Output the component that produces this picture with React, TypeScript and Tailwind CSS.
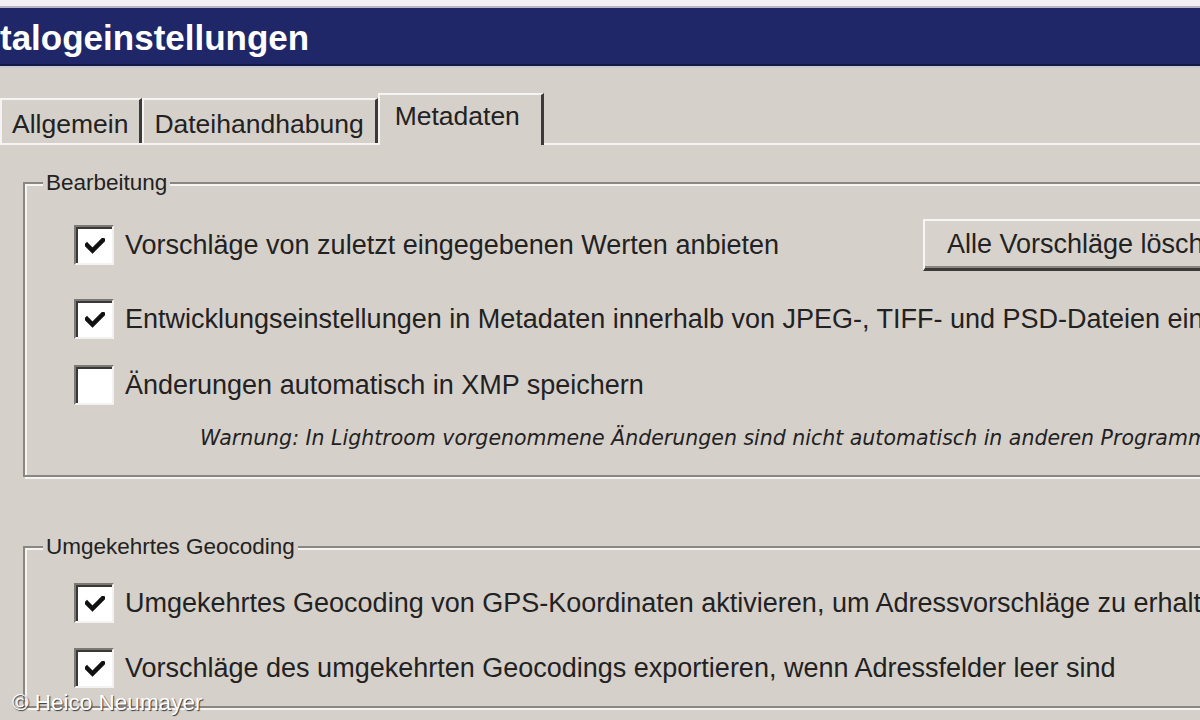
import type { ReactNode } from 'react';

const ui = { fontFamily: '"Liberation Sans", Arial, sans-serif' };

function Check({ checked }: { checked: boolean }) {
    return (
        <div className="flex h-[40px] w-[40px] shrink-0 border-t-2 border-l-2 border-r-2 border-b-2 border-t-[#7c7874] border-l-[#7c7874] border-r-[#f4f2f0] border-b-[#f4f2f0]">
            <div className="flex flex-1 items-center justify-center border-t-2 border-l-2 border-t-[#3a3836] border-l-[#3a3836] bg-white">
                {checked && (
                    <svg width="20" height="16" viewBox="0 0 20 16" aria-hidden="true">
                        <path d="M2 7 L7.5 12.5 L18 2" fill="none" stroke="#111" strokeWidth="4.5" strokeLinecap="square" />
                    </svg>
                )}
            </div>
        </div>
    );
}

function Row({ checked, children }: { checked: boolean; children: ReactNode }) {
    return (
        <div className="flex h-[40px] items-center">
            <div className="ml-[49px]">
                <Check checked={checked} />
            </div>
            <span className="ml-[11px] whitespace-nowrap text-[27px] text-[#222]">{children}</span>
        </div>
    );
}

function Group({ title, children }: { title: string; children: ReactNode }) {
    return (
        <fieldset className="w-[1240px] border-2 border-[#8a8682] shadow-[inset_2px_2px_0_#f6f4f2,2px_2px_0_#f6f4f2]">
            <legend className="ml-[18px] bg-[#d6d0cb] px-[3px] text-[22.5px] leading-[24px] text-[#222]">{title}</legend>
            {children}
        </fieldset>
    );
}

function Tab({ label, active }: { label: string; active?: boolean }) {
    return (
        <div
            className={
                active
                    ? 'relative z-10 -mb-[2px] flex h-[52px] items-start border-t-2 border-l-2 border-r-[3px] border-t-[#f6f4f2] border-l-[#f6f4f2] border-r-[#3c3a38] bg-[#d6d0cb] pl-[15px] pr-[21px] pt-[6px]'
                    : 'flex h-[45px] items-start border-t-2 border-l-2 border-r-[3px] border-t-[#f6f4f2] border-l-[#f6f4f2] border-r-[#3c3a38] bg-[#d6d0cb] pl-[10px] pr-[11px] pt-[9px]'
            }
        >
            <span className="whitespace-nowrap text-[26.5px] leading-[30px] text-[#222]">{label}</span>
        </div>
    );
}

export default function App() {
    return (
        <div style={ui} className="relative h-[720px] w-[1200px] overflow-hidden bg-[#d6d0cb]">
            {/* window frame + title bar */}
            <div className="h-[8px] border-b-2 border-b-[#b8b6c0] bg-[#f2f0f2]" />
            <div className="flex h-[58px] items-center border-b-2 border-b-[#111a40] bg-[#1f2769]">
                <span className="whitespace-nowrap pt-[4px] text-[35px] font-bold text-white">talogeinstellungen</span>
            </div>
            <div className="h-[2px] bg-[#c8c8d8]" />

            {/* tabs */}
            <div className="mt-[25px] flex items-end border-b-2 border-b-[#f6f4f2]">
                <Tab label="Allgemein" />
                <Tab label="Dateihandhabung" />
                <Tab label="Metadaten" active />
                <div className="flex-1" />
            </div>

            {/* panel */}
            <div className="flex flex-col gap-[58px] pl-[23px] pt-[26px]">
                <Group title="Bearbeitung">
                    <div className="flex flex-col pt-[24px] pb-[24px]">
                        <div className="flex h-[52px] items-center">
                            <div className="ml-[49px]">
                                <Check checked />
                            </div>
                            <span className="ml-[11px] whitespace-nowrap text-[27px] text-[#222]">
                                Vorschläge von zuletzt eingegebenen Werten anbieten
                            </span>
                            <button
                                type="button"
                                className="ml-[144px] h-[52px] w-[320px] shrink-0 border-t-2 border-l-2 border-r-[3px] border-b-[3px] border-t-[#f8f6f4] border-l-[#f8f6f4] border-r-[#3c3a38] border-b-[#3c3a38] bg-[#d8d2cd] pl-[22px] text-left text-[27px] text-[#222] shadow-[inset_-2px_-2px_0_#8a8682]"
                            >
                                <span className="whitespace-nowrap">Alle Vorschläge löschen</span>
                            </button>
                        </div>
                        <div className="mt-[28px]">
                            <Row checked>
                                Entwicklungseinstellungen in Metadaten innerhalb von JPEG-, TIFF- und PSD-Dateien einschließen
                            </Row>
                        </div>
                        <div className="mt-[26px]">
                            <Row checked={false}>Änderungen automatisch in XMP speichern</Row>
                        </div>
                        <p
                            style={{ fontFamily: '"DejaVu Sans", Verdana, sans-serif' }}
                            className="mt-[20px] ml-[175px] whitespace-nowrap text-[20.5px] leading-[26px] italic text-[#222]"
                        >
                            Warnung: In Lightroom vorgenommene Änderungen sind nicht automatisch in anderen Programmen sichtbar.
                        </p>
                    </div>
                </Group>

                <Group title="Umgekehrtes Geocoding">
                    <div className="flex flex-col gap-[25px] pt-[24px] pb-[18px]">
                        <Row checked>
                            Umgekehrtes Geocoding von GPS-Koordinaten aktivieren, um Adressvorschläge zu erhalten
                        </Row>
                        <Row checked>Vorschläge des umgekehrten Geocodings exportieren, wenn Adressfelder leer sind</Row>
                    </div>
                </Group>
            </div>

            {/* watermark */}
            <span className="absolute left-[12px] top-[686px] whitespace-nowrap text-[22.5px] text-white [text-shadow:1px_1px_1px_#333]">
                © Heico Neumayer
            </span>
        </div>
    );
}
